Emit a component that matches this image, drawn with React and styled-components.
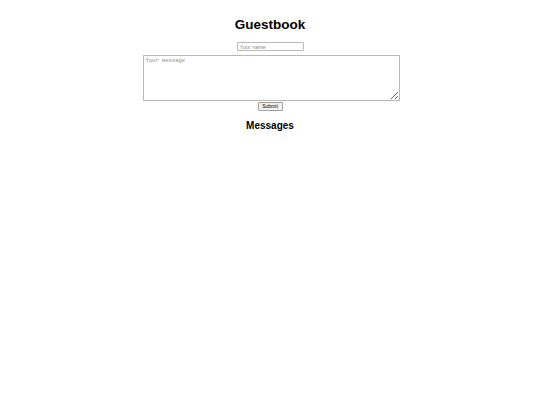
import styled, { createGlobalStyle } from "styled-components";

const GlobalStyle = createGlobalStyle`
  html, body {
    margin: 0;
    padding: 0;
    background: #ffffff;
  }
  body {
    font-family: "Liberation Sans", Arial, sans-serif;
    color: #000000;
  }
`;

const Page = styled.main`
  display: flex;
  flex-direction: column;
  align-items: center;
  padding-top: 17px;
`;

const Title = styled.h1`
  margin: 0;
  font-size: 13.5px;
  line-height: 16px;
  font-weight: bold;
`;

const Form = styled.form`
  display: flex;
  flex-direction: column;
  align-items: center;
  margin-top: 9px;
`;

const NameInput = styled.input`
  box-sizing: border-box;
  width: 67px;
  height: 9px;
  padding: 0 2px;
  border: 1px solid #b8b8b8;
  border-radius: 1px;
  font-family: "Liberation Sans", Arial, sans-serif;
  font-size: 5.5px;
  outline: none;

  &::placeholder {
    color: #8a8a8a;
  }
`;

const MessageArea = styled.textarea`
  box-sizing: border-box;
  width: 257px;
  height: 46px;
  margin: 4px 0 0 2px;
  padding: 1px 2px;
  border: 1px solid #b8b8b8;
  font-family: "Liberation Mono", "Courier New", monospace;
  font-size: 5.5px;
  resize: both;
  outline: none;

  &::placeholder {
    color: #8a8a8a;
  }
`;

const SubmitButton = styled.button`
  box-sizing: border-box;
  width: 25px;
  height: 9px;
  margin-top: 1px;
  padding: 0;
  border: 1px solid #a0a0a0;
  border-radius: 1px;
  background: #efefef;
  font-family: "Liberation Sans", Arial, sans-serif;
  font-size: 5px;
  line-height: 7px;
  color: #000;
`;

const SubTitle = styled.h2`
  margin: 9px 0 0;
  font-size: 10px;
  line-height: 12px;
  font-weight: bold;
`;

export default function App() {
  return (
    <>
      <GlobalStyle />
      <Page>
        <Title>Guestbook</Title>
        <Form onSubmit={(e) => e.preventDefault()}>
          <NameInput type="text" placeholder="Your name" />
          <MessageArea placeholder="Your message" />
          <SubmitButton type="submit">Submit</SubmitButton>
        </Form>
        <SubTitle>Messages</SubTitle>
      </Page>
    </>
  );
}
